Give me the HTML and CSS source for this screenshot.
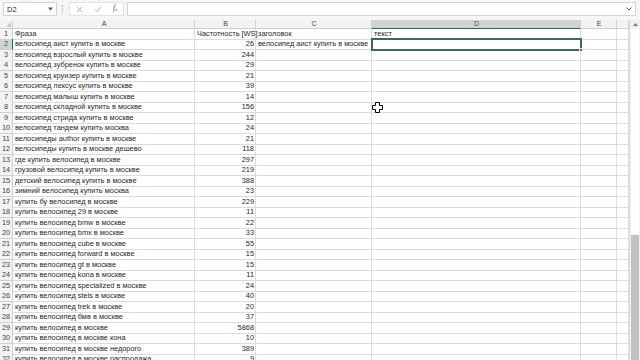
FILE: index.html
```html
<!DOCTYPE html>
<html lang="ru">
<head>
  <meta charset="UTF-8" />
  <title>Книга1 - Excel</title>
  <link rel="stylesheet" href="styles.css">
</head>
<body>
  <div class="app">
    <div class="formula-bar">
      <div class="name-box">
        <span>D2</span>
        <svg class="name-arrow" width="5" height="4" viewBox="0 0 5 4"><path d="M0 0.5h5L2.5 3.5z" fill="#555"/></svg>
      </div>
      <div class="grip"></div>
      <div class="fx-buttons">
        <svg width="7" height="7" viewBox="0 0 7 7"><path d="M1 1l5 5M6 1l-5 5" stroke="#a6a6a6" stroke-width="0.9"/></svg>
        <svg width="8" height="7" viewBox="0 0 8 7"><path d="M1 3.8l2 2L7 1" stroke="#a6a6a6" stroke-width="0.9" fill="none"/></svg>
        <span class="fx">f<sub>x</sub></span>
      </div>
      <div class="formula-input">
        <svg class="expand" width="6" height="4" viewBox="0 0 6 4"><path d="M0.5 0.5l2.5 2.5 2.5-2.5" stroke="#555" fill="none"/></svg>
      </div>
    </div>

    <div class="sheet-area">
      <div class="sheet">
        <div class="row head-row">
          <div class="cell corner"></div>
          <div class="cell col-head">A</div>
          <div class="cell col-head">B</div>
          <div class="cell col-head">C</div>
          <div class="cell col-head active">D</div>
          <div class="cell col-head">E</div>
          <div class="cell col-head"></div>
        </div>

        <div class="row"><div class="cell row-head">1</div><div class="cell">Фраза</div><div class="cell">Частотность [WS]</div><div class="cell">заголовок</div><div class="cell">текст</div><div class="cell"></div><div class="cell"></div></div>
        <div class="row"><div class="cell row-head active">2</div><div class="cell">велосипед аист купить в москве</div><div class="cell num">26</div><div class="cell">велосипед аист купить в москве</div><div class="cell selected"><span class="handle"></span></div><div class="cell"></div><div class="cell"></div></div>
        <div class="row"><div class="cell row-head">3</div><div class="cell">велосипед взрослый купить в москве</div><div class="cell num">244</div><div class="cell"></div><div class="cell"></div><div class="cell"></div><div class="cell"></div></div>
        <div class="row"><div class="cell row-head">4</div><div class="cell">велосипед зубренок купить в москве</div><div class="cell num">29</div><div class="cell"></div><div class="cell"></div><div class="cell"></div><div class="cell"></div></div>
        <div class="row"><div class="cell row-head">5</div><div class="cell">велосипед круизер купить в москве</div><div class="cell num">21</div><div class="cell"></div><div class="cell"></div><div class="cell"></div><div class="cell"></div></div>
        <div class="row"><div class="cell row-head">6</div><div class="cell">велосипед лексус купить в москве</div><div class="cell num">39</div><div class="cell"></div><div class="cell"></div><div class="cell"></div><div class="cell"></div></div>
        <div class="row"><div class="cell row-head">7</div><div class="cell">велосипед малыш купить в москве</div><div class="cell num">14</div><div class="cell"></div><div class="cell"></div><div class="cell"></div><div class="cell"></div></div>
        <div class="row"><div class="cell row-head">8</div><div class="cell">велосипед складной купить в москве</div><div class="cell num">156</div><div class="cell"></div><div class="cell"></div><div class="cell"></div><div class="cell"></div></div>
        <div class="row"><div class="cell row-head">9</div><div class="cell">велосипед стрида купить в москве</div><div class="cell num">12</div><div class="cell"></div><div class="cell"></div><div class="cell"></div><div class="cell"></div></div>
        <div class="row"><div class="cell row-head">10</div><div class="cell">велосипед тандем купить москва</div><div class="cell num">24</div><div class="cell"></div><div class="cell"></div><div class="cell"></div><div class="cell"></div></div>
        <div class="row"><div class="cell row-head">11</div><div class="cell">велосипеды author купить в москве</div><div class="cell num">21</div><div class="cell"></div><div class="cell"></div><div class="cell"></div><div class="cell"></div></div>
        <div class="row"><div class="cell row-head">12</div><div class="cell">велосипеды купить в москве дешево</div><div class="cell num">118</div><div class="cell"></div><div class="cell"></div><div class="cell"></div><div class="cell"></div></div>
        <div class="row"><div class="cell row-head">13</div><div class="cell">где купить велосипед в москве</div><div class="cell num">297</div><div class="cell"></div><div class="cell"></div><div class="cell"></div><div class="cell"></div></div>
        <div class="row"><div class="cell row-head">14</div><div class="cell">грузовой велосипед купить в москве</div><div class="cell num">219</div><div class="cell"></div><div class="cell"></div><div class="cell"></div><div class="cell"></div></div>
        <div class="row"><div class="cell row-head">15</div><div class="cell">детский велосипед купить в москве</div><div class="cell num">388</div><div class="cell"></div><div class="cell"></div><div class="cell"></div><div class="cell"></div></div>
        <div class="row"><div class="cell row-head">16</div><div class="cell">зимний велосипед купить москва</div><div class="cell num">23</div><div class="cell"></div><div class="cell"></div><div class="cell"></div><div class="cell"></div></div>
        <div class="row"><div class="cell row-head">17</div><div class="cell">купить бу велосипед в москве</div><div class="cell num">229</div><div class="cell"></div><div class="cell"></div><div class="cell"></div><div class="cell"></div></div>
        <div class="row"><div class="cell row-head">18</div><div class="cell">купить велосипед 29 в москве</div><div class="cell num">11</div><div class="cell"></div><div class="cell"></div><div class="cell"></div><div class="cell"></div></div>
        <div class="row"><div class="cell row-head">19</div><div class="cell">купить велосипед bmw в москве</div><div class="cell num">22</div><div class="cell"></div><div class="cell"></div><div class="cell"></div><div class="cell"></div></div>
        <div class="row"><div class="cell row-head">20</div><div class="cell">купить велосипед bmx в москве</div><div class="cell num">33</div><div class="cell"></div><div class="cell"></div><div class="cell"></div><div class="cell"></div></div>
        <div class="row"><div class="cell row-head">21</div><div class="cell">купить велосипед cube в москве</div><div class="cell num">55</div><div class="cell"></div><div class="cell"></div><div class="cell"></div><div class="cell"></div></div>
        <div class="row"><div class="cell row-head">22</div><div class="cell">купить велосипед forward в москве</div><div class="cell num">15</div><div class="cell"></div><div class="cell"></div><div class="cell"></div><div class="cell"></div></div>
        <div class="row"><div class="cell row-head">23</div><div class="cell">купить велосипед gt в москве</div><div class="cell num">15</div><div class="cell"></div><div class="cell"></div><div class="cell"></div><div class="cell"></div></div>
        <div class="row"><div class="cell row-head">24</div><div class="cell">купить велосипед kona в москве</div><div class="cell num">11</div><div class="cell"></div><div class="cell"></div><div class="cell"></div><div class="cell"></div></div>
        <div class="row"><div class="cell row-head">25</div><div class="cell">купить велосипед specialized в москве</div><div class="cell num">24</div><div class="cell"></div><div class="cell"></div><div class="cell"></div><div class="cell"></div></div>
        <div class="row"><div class="cell row-head">26</div><div class="cell">купить велосипед stels в москве</div><div class="cell num">40</div><div class="cell"></div><div class="cell"></div><div class="cell"></div><div class="cell"></div></div>
        <div class="row"><div class="cell row-head">27</div><div class="cell">купить велосипед trek в москве</div><div class="cell num">20</div><div class="cell"></div><div class="cell"></div><div class="cell"></div><div class="cell"></div></div>
        <div class="row"><div class="cell row-head">28</div><div class="cell">купить велосипед бмв в москве</div><div class="cell num">37</div><div class="cell"></div><div class="cell"></div><div class="cell"></div><div class="cell"></div></div>
        <div class="row"><div class="cell row-head">29</div><div class="cell">купить велосипед в москве</div><div class="cell num">5868</div><div class="cell"></div><div class="cell"></div><div class="cell"></div><div class="cell"></div></div>
        <div class="row"><div class="cell row-head">30</div><div class="cell">купить велосипед в москве кона</div><div class="cell num">10</div><div class="cell"></div><div class="cell"></div><div class="cell"></div><div class="cell"></div></div>
        <div class="row"><div class="cell row-head">31</div><div class="cell">купить велосипед в москве недорого</div><div class="cell num">389</div><div class="cell"></div><div class="cell"></div><div class="cell"></div><div class="cell"></div></div>
        <div class="row"><div class="cell row-head">32</div><div class="cell">купить велосипед в москве распродажа</div><div class="cell num">9</div><div class="cell"></div><div class="cell"></div><div class="cell"></div><div class="cell"></div></div>

        <svg class="cursor" width="11" height="11" viewBox="0 0 11 11">
          <path d="M3.5 0.5h4v3h3v4h-3v3h-4v-3h-3v-4h3z" fill="#fff" stroke="#000" stroke-width="1"/>
        </svg>
      </div>

      <div class="scrollbar">
        <div class="scroll-up">
          <svg width="5" height="3" viewBox="0 0 5 3"><path d="M0 3L2.5 0 5 3z" fill="#777"/></svg>
        </div>
        <div class="scroll-track"></div>
        <div class="scroll-thumb"></div>
      </div>
    </div>
  </div>
</body>
</html>
```

FILE: styles.css
```css
:root {
  --grid: #dcdcdc;
  --head-bg: #f3f3f3;
  --text: #262626;
  --green: #217346;
}

body {
  margin: 0;
  font-family: 'Liberation Sans', Arial, sans-serif;
  color: var(--text);
  background: #fff;
  overflow: hidden;
}

.app {
  width: 640px;
  height: 360px;
  display: flex;
  flex-direction: column;
  overflow: hidden;
}

/* Formula bar */
.formula-bar {
  height: 20px;
  flex: none;
  display: flex;
  align-items: flex-start;
  padding: 2px 4px 0 3px;
  box-sizing: border-box;
  background: #f6f6f6;
  gap: 3px;
}

.name-box {
  width: 54px;
  height: 14px;
  box-sizing: border-box;
  border: 1px solid #d4d4d4;
  background: #fff;
  display: flex;
  align-items: center;
  justify-content: space-between;
  padding: 0 3px 0 3px;
  font-size: 7.5px;
}

.grip {
  width: 1px;
  height: 8px;
  margin: 3px 2px 0;
  border-left: 1px dotted #b0b0b0;
}

.fx-buttons {
  width: 55px;
  height: 14px;
  box-sizing: border-box;
  border: 1px solid #e2e2e2;
  background: #fff;
  display: flex;
  align-items: center;
  gap: 11px;
  padding-left: 6px;
}

.fx {
  font-family: 'Liberation Serif', serif;
  font-style: italic;
  font-size: 8px;
  color: #555;
  line-height: 8px;
}

.fx sub {
  font-size: 5px;
  vertical-align: -1px;
}

.formula-input {
  flex: 1;
  height: 14px;
  box-sizing: border-box;
  border: 1px solid #d4d4d4;
  background: #fff;
  display: flex;
  align-items: center;
  justify-content: flex-end;
  padding-right: 3px;
}

/* Sheet */
.sheet-area {
  flex: 1;
  display: flex;
  overflow: hidden;
}

.sheet {
  flex: 1;
  position: relative;
  overflow: hidden;
}

.row {
  display: grid;
  grid-template-columns: 13px 182px 61px 116px 209px 36px 1fr;
  height: 10.5px;
}

.cell {
  box-sizing: border-box;
  border-right: 1px solid var(--grid);
  border-bottom: 1px solid var(--grid);
  font-size: 7.4px;
  line-height: 10px;
  padding: 0 1px 0 2px;
  white-space: nowrap;
  overflow: visible;
  position: relative;
}

.num {
  text-align: right;
}

.head-row {
  height: 8.5px;
}

.head-row .cell {
  background: var(--head-bg);
  border-color: #cfcfcf;
  text-align: center;
  color: #444;
  font-size: 7px;
  line-height: 8px;
}

.col-head.active {
  background: #d2d2d2;
  color: var(--green);
  border-bottom: 1px solid var(--green);
}

.corner::after {
  content: '';
  position: absolute;
  right: 1px;
  bottom: 1px;
  border-left: 5px solid transparent;
  border-bottom: 5px solid #c8c8c8;
}

.row-head {
  background: var(--head-bg);
  border-color: #cfcfcf;
  text-align: center;
  color: #444;
  padding: 0;
}

.row-head.active {
  background: #d2d2d2;
  color: var(--green);
  border-right: 1px solid var(--green);
}

.selected {
  outline: 2px solid #3c6b52;
  outline-offset: -1px;
  z-index: 2;
}

.handle {
  position: absolute;
  right: -3px;
  bottom: -3px;
  width: 4px;
  height: 4px;
  background: #3c6b52;
  border: 1px solid #fff;
  box-sizing: border-box;
}

.cursor {
  position: absolute;
  left: 372px;
  top: 82px;
}

/* Scrollbar */
.scrollbar {
  width: 10px;
  flex: none;
  display: flex;
  flex-direction: column;
  background: #f0f0f0;
  border-left: 1px solid #dcdcdc;
}

.scroll-up {
  height: 9px;
  display: flex;
  align-items: center;
  justify-content: center;
  background: #f0f0f0;
}

.scroll-track {
  height: 206px;
  background: #fff;
  margin: 0 1px;
}

.scroll-thumb {
  flex: 1;
  background: #c2c2c2;
  margin: 0 1px;
}
```
